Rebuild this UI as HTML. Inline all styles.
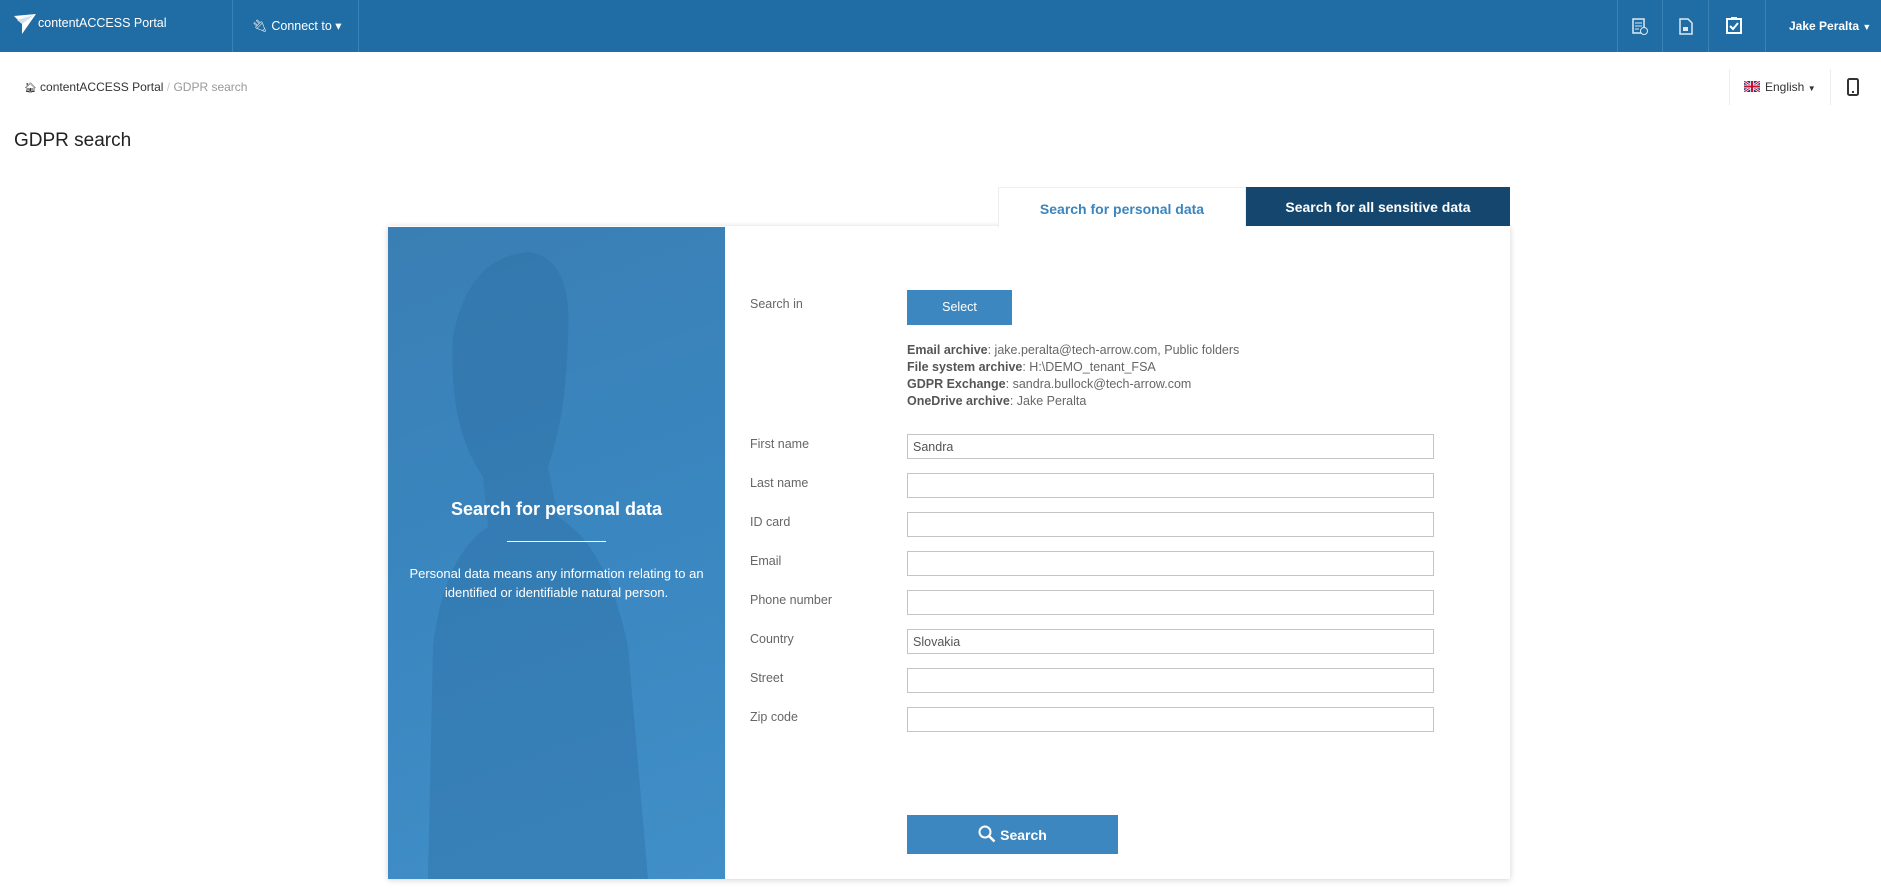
<!DOCTYPE html>
<html><head><meta charset="utf-8"><style>
*{box-sizing:border-box;margin:0;padding:0}
body{width:1881px;height:891px;overflow:hidden;background:#fff;font-family:"Liberation Sans",sans-serif;position:relative;color:#333}
.a{position:absolute}
.nav{left:0;top:0;width:1881px;height:52px;background:#1f6da4}
.vd{top:0;width:1px;height:52px;background:#3a82b6}
.w{color:#fff}
.lbl{left:750px;font-size:12.5px;color:#666}
.inp{left:907px;width:527px;height:25px;border:1px solid #c4c4c4;font-size:12.5px;color:#555;padding:5px 0 0 5px}
.arc{left:907px;font-size:12.5px;color:#666}
.arc b{color:#555}
</style></head><body>
<div class="a nav"></div>
<svg class="a" style="left:14px;top:14px" width="22" height="20" viewBox="0 0 22 20"><path d="M0 2 L22 0 L8 20 L8 10 Z" fill="#fff"/><path d="M3 6 L20 1 L8 10Z" fill="#cfe0ee"/></svg>
<div class="a w" style="left:38px;top:16px;font-size:12.5px">contentACCESS Portal</div>
<div class="a vd" style="left:232px"></div><div class="a vd" style="left:358px"></div>
<div class="a w" style="left:252px;top:18px;font-size:12.5px">🔌︎ Connect to ▾</div>
<div class="a vd" style="left:1617px"></div><div class="a vd" style="left:1662px"></div><div class="a vd" style="left:1708px"></div><div class="a vd" style="left:1765px"></div>
<svg class="a" style="left:1632px;top:18px" width="16" height="17"><rect x="1" y="1" width="11" height="14" fill="none" stroke="#dfe9f2" stroke-width="1.5"/><path d="M3 5h7M3 8h7M3 11h4" stroke="#dfe9f2"/><circle cx="12" cy="13" r="3.5" fill="#1f6da4" stroke="#dfe9f2"/></svg>
<svg class="a" style="left:1679px;top:18px" width="14" height="17"><path d="M1 1h8l4 4v11H1z" fill="none" stroke="#dfe9f2" stroke-width="1.5"/><rect x="4" y="9" width="5" height="4" fill="#dfe9f2"/></svg>
<svg class="a" style="left:1726px;top:16px" width="16" height="18"><rect x="1" y="3" width="14" height="14" fill="none" stroke="#fff" stroke-width="2"/><rect x="5" y="1" width="6" height="3" fill="#fff"/><path d="M4 10l3 3 5-6" fill="none" stroke="#fff" stroke-width="2"/></svg>
<div class="a w" style="left:1789px;top:19px;font-size:12px;font-weight:bold">Jake Peralta <span style="font-size:9px">▼</span></div>
<div class="a" style="left:24px;top:80px;font-size:12px"><span style="font-size:10px">🏠︎</span> contentACCESS Portal <span style="color:#ccc">/</span> <span style="color:#999">GDPR search</span></div>
<div class="a" style="left:1729px;top:69px;width:1px;height:36px;background:#eee"></div>
<div class="a" style="left:1830px;top:69px;width:1px;height:36px;background:#eee"></div>
<svg class="a" style="left:1744px;top:81px" width="16" height="11"><rect width="16" height="11" fill="#233e8b"/><path d="M0 0L16 11M16 0L0 11" stroke="#fff" stroke-width="2.5"/><path d="M0 0L16 11M16 0L0 11" stroke="#c8102e" stroke-width="1"/><path d="M8 0v11M0 5.5h16" stroke="#fff" stroke-width="3.5"/><path d="M8 0v11M0 5.5h16" stroke="#c8102e" stroke-width="2"/></svg>
<div class="a" style="left:1765px;top:80px;font-size:12px">English <span style="font-size:8px">▼</span></div>
<svg class="a" style="left:1847px;top:78px" width="12" height="18"><rect x="1" y="1" width="10" height="16" rx="1.5" fill="none" stroke="#333" stroke-width="2"/><rect x="5" y="13" width="2" height="2" fill="#333"/></svg>
<div class="a" style="left:14px;top:130px;font-size:19px;color:#222">GDPR search</div>
<div class="a" style="left:388px;top:226px;width:1122px;height:653px;background:#fff;box-shadow:0 1px 6px rgba(0,0,0,.18)"></div>
<div class="a" style="left:998px;top:187px;width:248px;height:40px;background:#fff;border:1px solid #eee;border-bottom:none;color:#3b84bd;font-size:14px;font-weight:bold;text-align:center;padding-top:13px">Search for personal data</div>
<div class="a" style="left:1246px;top:187px;width:264px;height:39px;background:#15476e;color:#fff;font-size:14px;font-weight:bold;text-align:center;padding-top:12px">Search for all sensitive data</div>
<div class="a" style="left:388px;top:227px;width:337px;height:652px;background:linear-gradient(160deg,#3a7fb4 0%,#3a86c0 50%,#418fc8 100%);overflow:hidden">
<svg width="337" height="652" style="position:absolute;left:0;top:0"><path d="M40 652 L45 420 Q55 330 100 300 L95 250 Q60 200 65 110 Q80 30 140 25 Q185 30 180 110 Q178 190 160 240 L170 290 Q220 320 240 420 L260 652Z" fill="#2d6ea3" opacity=".4"/></svg>
</div>
<div class="a w" style="left:388px;top:499px;width:337px;text-align:center;font-size:18px;font-weight:bold">Search for personal data</div>
<div class="a" style="left:507px;top:541px;width:99px;height:1px;background:#fff"></div>
<div class="a w" style="left:388px;top:564px;width:337px;text-align:center;font-size:13px;line-height:19px">Personal data means any information relating to an identified or identifiable natural person.</div>
<div class="a lbl" style="top:297px">Search in</div>
<div class="a" style="left:907px;top:290px;width:105px;height:35px;background:#3c87bf;color:#fff;font-size:12.5px;text-align:center;padding-top:10px">Select</div>
<div class="a arc" style="top:342px;line-height:17px"><b>Email archive</b>: jake.peralta@tech-arrow.com, Public folders<br><b>File system archive</b>: H:\DEMO_tenant_FSA<br><b>GDPR Exchange</b>: sandra.bullock@tech-arrow.com<br><b>OneDrive archive</b>: Jake Peralta</div>
<div class="a lbl" style="top:437px">First name</div><div class="a inp" style="top:434px">Sandra</div>
<div class="a lbl" style="top:476px">Last name</div><div class="a inp" style="top:473px"></div>
<div class="a lbl" style="top:515px">ID card</div><div class="a inp" style="top:512px"></div>
<div class="a lbl" style="top:554px">Email</div><div class="a inp" style="top:551px"></div>
<div class="a lbl" style="top:593px">Phone number</div><div class="a inp" style="top:590px"></div>
<div class="a lbl" style="top:632px">Country</div><div class="a inp" style="top:629px">Slovakia</div>
<div class="a lbl" style="top:671px">Street</div><div class="a inp" style="top:668px"></div>
<div class="a lbl" style="top:710px">Zip code</div><div class="a inp" style="top:707px"></div>
<div class="a" style="left:907px;top:815px;width:211px;height:39px;background:#3c87bf;color:#fff;font-size:14px;font-weight:bold;text-align:center;padding-top:10px"><svg width="18" height="18" style="vertical-align:-3px;margin-right:4px"><circle cx="7" cy="7" r="5.5" fill="none" stroke="#fff" stroke-width="2"/><path d="M11 11l5.5 5.5" stroke="#fff" stroke-width="2.5"/></svg>Search</div>
</body></html>
